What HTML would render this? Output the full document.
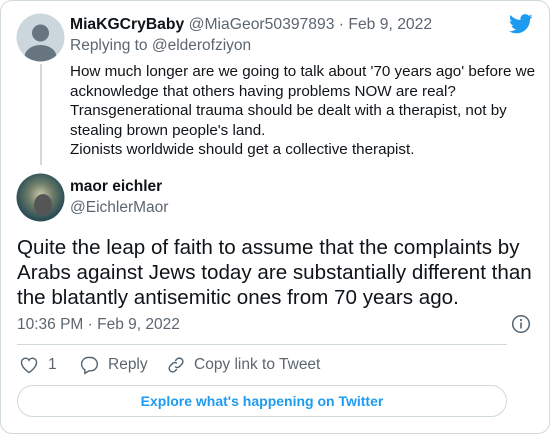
<!DOCTYPE html><html><head><style>
body{margin:0;width:550px;height:434px;background:#fff;font-family:"Liberation Sans",Arial,sans-serif;color:#0f1419;position:relative;overflow:hidden}
.card{position:absolute;left:0;top:0;width:548px;height:432px;border:1px solid #cfd9de;border-radius:12px}
.a{position:absolute}
.g{color:#5b6670}
</style></head><body>
<div class="card"></div>
<svg class="a" style="left:16px;top:13px" width="49" height="49" viewBox="0 0 49 49"><defs><clipPath id="c"><circle cx="24.5" cy="24.5" r="24"/></clipPath></defs><circle cx="24.5" cy="24.5" r="24" fill="#ccd6dd"/><g clip-path="url(#c)" fill="#66757f"><circle cx="24.5" cy="20" r="8.5"/><ellipse cx="24.5" cy="44" rx="16" ry="12"/></g></svg>
<div class="a" style="left:40px;top:64px;width:2px;height:101px;background:#cfd9de"></div>
<svg class="a" style="left:16px;top:173px" width="49" height="49"><defs><radialGradient id="r" cx="50%" cy="45%"><stop offset="0" stop-color="#c9c9a8"/><stop offset="0.5" stop-color="#6f7e6a"/><stop offset="1" stop-color="#2c4f56"/></radialGradient></defs><circle cx="24.5" cy="24.5" r="24" fill="url(#r)"/><ellipse cx="27" cy="32" rx="9" ry="11" fill="#555"/></svg>
<svg class="a" style="left:509px;top:14px" width="24" height="20" viewBox="0 0 24 20"><path fill="#1d9bf0" d="M23.6 2.4c-.9.4-1.8.6-2.8.8 1-.6 1.8-1.6 2.1-2.7-.9.6-2 1-3.1 1.2C18.9.7 17.6.1 16.2.1c-2.7 0-4.8 2.2-4.8 4.8 0 .4 0 .8.1 1.1C7.4 5.8 3.9 3.9 1.5 1 1.1 1.7.9 2.5.9 3.4c0 1.7.9 3.2 2.2 4-.8 0-1.5-.2-2.2-.6v.1c0 2.3 1.7 4.3 3.9 4.7-.4.1-.8.2-1.3.2-.3 0-.6 0-.9-.1.6 1.9 2.4 3.3 4.5 3.4-1.700 1.3-3.7 2.1-6 2.1-.4 0-.8 0-1.2-.1 2.1 1.4 4.7 2.2 7.4 2.2 8.9 0 13.700-7.4 13.7-13.7v-.6c1-.7 1.8-1.5 2.4-2.5z"/></svg>
<div class="a" style="left:70px;top:16px;font-size:15.7px;white-space:nowrap"><b>MiaKGCryBaby</b> <span class="g">@MiaGeor50397893 · Feb 9, 2022</span></div>
<div class="a g" style="left:70px;top:37px;font-size:15.5px">Replying to @elderofziyon</div>
<div class="a" style="left:70px;top:62px;font-size:15.2px;line-height:19.5px;width:478px">How much longer are we going to talk about '70 years ago' before we acknowledge that others having problems NOW are real?<br>Transgenerational trauma should be dealt with a therapist, not by stealing brown people's land.<br>Zionists worldwide should get a collective therapist.</div>
<div class="a" style="left:70px;top:178px;font-size:15.5px;font-weight:bold">maor eichler</div>
<div class="a g" style="left:70px;top:199px;font-size:15.5px">@EichlerMaor</div>
<div class="a" style="left:17px;top:235px;font-size:20.6px;line-height:25px;width:530px">Quite the leap of faith to assume that the complaints by Arabs against Jews today are substantially different than the blatantly antisemitic ones from 70 years ago.</div>
<div class="a g" style="left:17px;top:316px;font-size:15.5px">10:36 PM · Feb 9, 2022</div>
<svg class="a" style="left:511px;top:314px" width="20" height="20" viewBox="0 0 20 20"><circle cx="10" cy="10" r="8.3" fill="none" stroke="#536471" stroke-width="1.5"/><circle cx="10" cy="6" r="1.1" fill="#536471"/><path d="M10 8.5v6" stroke="#536471" stroke-width="1.6"/></svg>
<div class="a" style="left:17px;top:344px;width:490px;height:1px;background:#cfd9de"></div>
<svg class="a" style="left:19px;top:355px" width="20" height="20" viewBox="0 0 24 24"><path d="M12 21s-9-5.6-9-12a4.8 4.8 0 0 1 9-2.6A4.8 4.8 0 0 1 21 9c0 6.4-9 12-9 12z" fill="none" stroke="#536471" stroke-width="1.7"/></svg>
<div class="a g" style="left:48px;top:356px;font-size:15.5px">1</div>
<svg class="a" style="left:79px;top:355px" width="20" height="20" viewBox="0 0 24 24"><path d="M10 3h4a8 8 0 0 1 0 16h-2l-5 3v-4.2A8 8 0 0 1 10 3z" fill="none" stroke="#536471" stroke-width="1.7"/></svg>
<div class="a g" style="left:108px;top:356px;font-size:15.5px">Reply</div>
<svg class="a" style="left:166px;top:355px" width="20" height="20" viewBox="0 0 24 24"><g fill="none" stroke="#536471" stroke-width="1.7"><path d="M11 7l2-2a4 4 0 0 1 6 6l-3 3a4 4 0 0 1-5 0"/><path d="M13 17l-2 2a4 4 0 0 1-6-6l3-3a4 4 0 0 1 5 0"/></g></svg>
<div class="a g" style="left:194px;top:356px;font-size:15.5px">Copy link to Tweet</div>
<div class="a" style="left:17px;top:385px;width:488px;height:30px;border:1px solid #cfd9de;border-radius:16px;text-align:center;line-height:30px;font-size:14px;font-weight:bold;color:#1d9bf0">Explore what's happening on Twitter</div>
</body></html>
